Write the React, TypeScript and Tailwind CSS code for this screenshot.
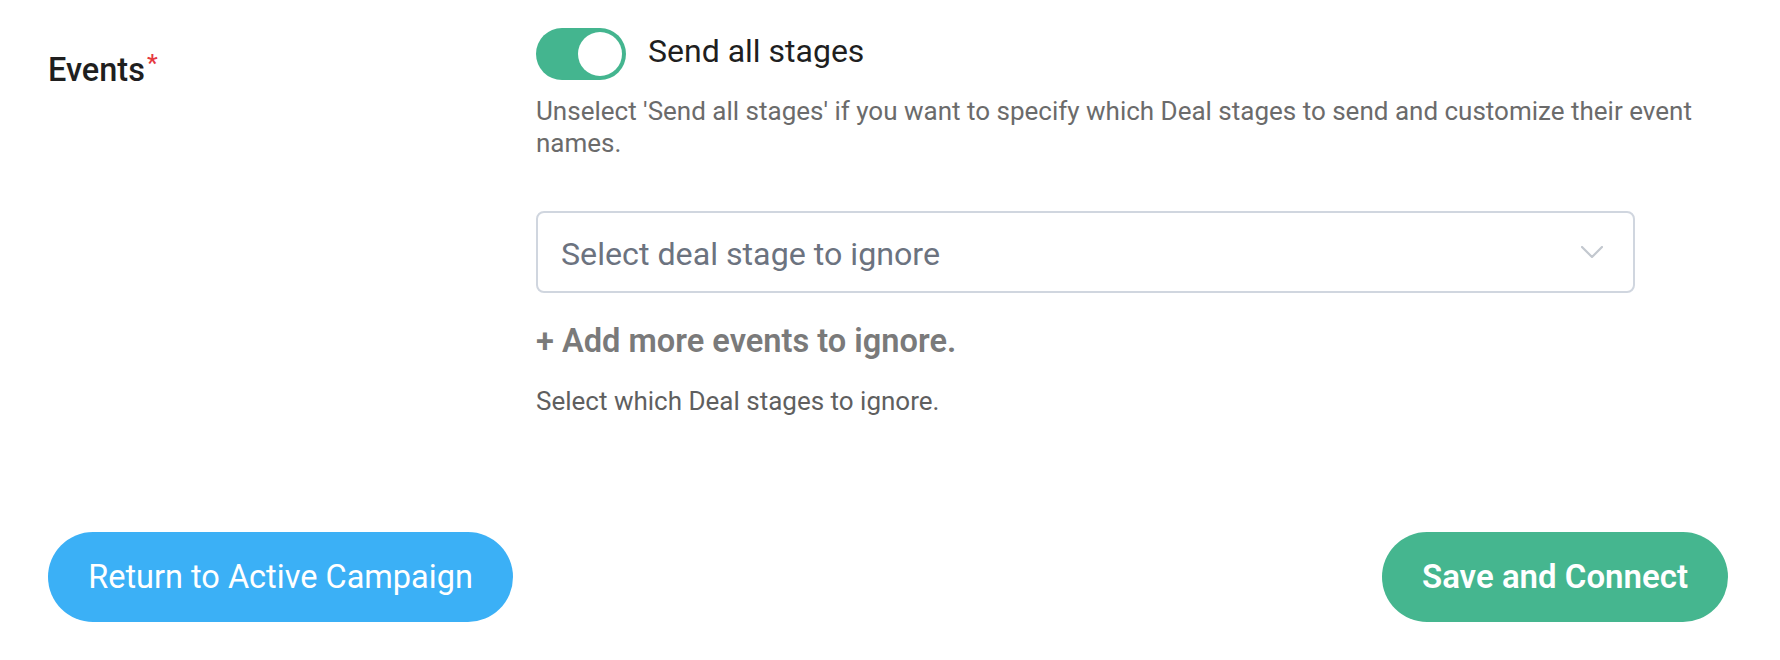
import { useState } from "react"

const font = { fontFamily: "Roboto, 'Liberation Sans', sans-serif" }

function Toggle({ on, onChange }: { on: boolean; onChange: (v: boolean) => void }) {
  return (
    <button
      type="button"
      onClick={() => onChange(!on)}
      className={`flex h-[52px] w-[90px] shrink-0 items-center rounded-full p-[4px] transition-colors ${
        on ? "justify-end bg-[#44b58f]" : "justify-start bg-[#cfd5dd]"
      }`}
    >
      <span className="block h-[44px] w-[44px] rounded-full bg-white" />
    </button>
  )
}

export default function App() {
  const [sendAll, setSendAll] = useState(true)

  return (
    <div className="min-h-screen bg-white pl-[48px] pr-[52px] pt-[28px]" style={font}>
      <div className="flex">
        {/* Label */}
        <div className="w-[488px] shrink-0 pt-[22px]">
          <span className="text-[32.5px] font-medium leading-[40px] text-[#1f1f1f]">
            Events
            <sup className="relative -top-[10px] ml-[2px] text-[24px] text-[#e5393e]">*</sup>
          </span>
        </div>

        {/* Field */}
        <div className="flex-1">
          <div className="flex items-start gap-[22px]">
            <Toggle on={sendAll} onChange={setSendAll} />
            <span className="text-[32px] leading-[46px] text-[#1f1f1f]">Send all stages</span>
          </div>

          <p className="mt-[15px] text-[26px] leading-[32px] text-[#6b6b6b]">
            Unselect 'Send all stages' if you want to specify which Deal stages to send and customize their event
            names.
          </p>

          <div className="mt-[52px] flex h-[82px] w-[1099px] items-center justify-between rounded-[8px] border-2 border-[#d0d6df] pl-[23px] pr-[30px] pt-[5px]">
            <span className="text-[32.2px] text-[#6c737f]">Select deal stage to ignore</span>
            <svg width="22" height="12" viewBox="0 0 22 12" fill="none" className="-mt-[5px]">
              <path d="M1 1l10 10L21 1" stroke="#c3c8cf" strokeWidth="2.2" strokeLinecap="round" strokeLinejoin="round" />
            </svg>
          </div>

          <div className="mt-[28px] text-[32.6px] font-semibold leading-[40px] text-[#7a7a7a]">
            + Add more events to ignore.
          </div>

          <p className="mt-[24px] text-[26px] leading-[32px] text-[#5f5f5f]">Select which Deal stages to ignore.</p>
        </div>
      </div>

      <div className="mt-[115px] flex items-center justify-between">
        <button className="h-[90px] w-[465px] rounded-full bg-[#3bb0f6] text-[32.5px] text-white">
          Return to Active Campaign
        </button>
        <button className="h-[90px] w-[346px] rounded-full bg-[#45b68f] text-[33px] font-semibold text-white">
          Save and Connect
        </button>
      </div>
    </div>
  )
}
